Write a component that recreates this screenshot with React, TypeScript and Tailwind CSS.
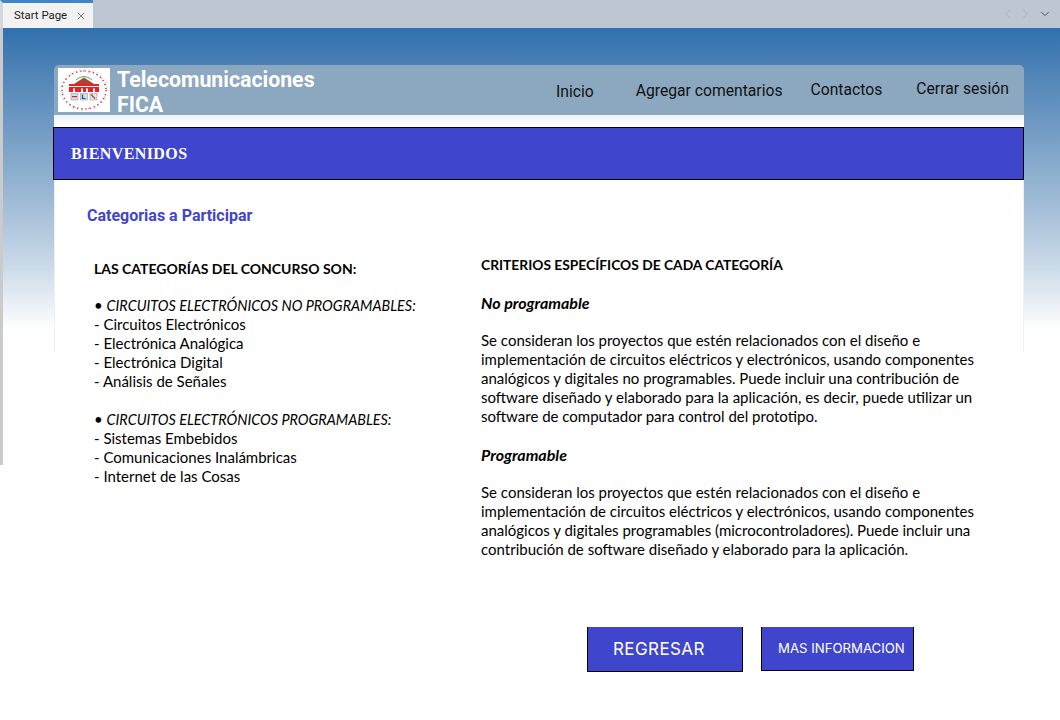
import React from "react";

const Logo = () => (
  <svg viewBox="0 0 52 44" className="w-[52px] h-[44px] bg-white shrink-0">
    {/* outer ring: red lettering and grey dots */}
    <ellipse cx="26" cy="22" rx="22" ry="19" fill="none" stroke="#e0242c" strokeWidth="1.5" strokeDasharray="1.2 3" />
    <ellipse cx="26" cy="22" rx="22" ry="19" fill="none" stroke="#666" strokeWidth="1" strokeDasharray="0.8 6" />
    <ellipse cx="26" cy="22" rx="24" ry="20.5" fill="none" stroke="#aaa" strokeWidth="0.5" strokeDasharray="1.5 3" />
    {/* green arc + roof */}
    <path d="M18 12 Q26 5 34 12" fill="none" stroke="#3aa655" strokeWidth="0.9" />
    <path d="M16 16 L26 9.5 L36 16 Z" fill="#a8452c" />
    {/* red building */}
    <rect x="11" y="16" width="30" height="2" fill="#ee1c25" />
    <rect x="11" y="19" width="30" height="5" fill="#ee1c25" />
    <rect x="15" y="20.5" width="2" height="3.5" fill="#fff" />
    <rect x="23" y="20.5" width="2" height="3.5" fill="#fff" />
    <rect x="28" y="20.5" width="2" height="3.5" fill="#fff" />
    <rect x="35" y="20.5" width="2" height="3.5" fill="#fff" />
    {/* small boxes */}
    <rect x="13" y="25.5" width="7" height="6.5" fill="#cfe0ea" stroke="#777" strokeWidth="0.4" />
    <rect x="14" y="28" width="5" height="1.2" fill="#d8242c" />
    <rect x="22.5" y="25.5" width="7" height="6.5" fill="#cfe0ea" stroke="#777" strokeWidth="0.4" />
    <path d="M24.5 26.5 L24.5 30.5 L27.5 30.5" fill="none" stroke="#1d4e89" strokeWidth="1.2" />
    <rect x="32" y="25.5" width="7" height="6.5" fill="#dfe6ea" stroke="#777" strokeWidth="0.4" />
    <path d="M33 26.5 L37 30.5" stroke="#a8452c" strokeWidth="1.2" />
  </svg>
);

const App = () => {
  return (
    <div className="w-[1060px] h-[720px] overflow-hidden bg-white flex flex-col font-['Lato',sans-serif] text-[15px] leading-[19px] text-black">
      {/* Tab bar */}
      <div className="h-[28px] shrink-0 bg-[#bdc7d3] flex items-end justify-between">
        <div className="w-[93px] h-[28px] border-t-[3px] border-t-[#3f86c9] border-l-[3px] border-l-[#d4d8dc] bg-[#f2f2f2] flex items-center pl-[11px] gap-[10px] font-['Roboto',sans-serif] text-[11.4px]">
          <span className="text-[#222]">Start Page</span>
          <svg viewBox="0 0 10 10" className="w-[8px] h-[8px]" stroke="#666" strokeWidth="1" fill="none">
            <path d="M1 1 L9 9 M9 1 L1 9" />
          </svg>
        </div>
        <div className="h-[28px] flex items-center gap-[11px] pr-[10px]">
          <svg viewBox="0 0 6 10" className="w-[6px] h-[10px]" stroke="#aab2bc" strokeWidth="1" fill="none">
            <path d="M5 0.5 L0.8 5 L5 9.5" />
          </svg>
          <svg viewBox="0 0 6 10" className="w-[6px] h-[10px]" stroke="#aab2bc" strokeWidth="1" fill="none">
            <path d="M1 0.5 L5.2 5 L1 9.5" />
          </svg>
          <svg viewBox="0 0 12 8" className="w-[10px] h-[6px] ml-[1px]" stroke="#555" strokeWidth="1.3" fill="none">
            <path d="M1 1.5 L6 6 L11 1.5" />
          </svg>
        </div>
      </div>

      {/* Page */}
      <div className="flex-1 pl-[54px] pr-[36px] pt-[37px] bg-no-repeat bg-[linear-gradient(#cbcbcb,#cbcbcb),linear-gradient(#3070ae_0%,#4a80b5_12%,#85a9cb_44%,#c0d2e4_74%,#e6edf4_90%,#fff_100%)] [background-size:3px_437px,100%_302px]">
        <div className="w-[970px]">
          {/* Header */}
          <div className="h-[50px] rounded-t-[5px] bg-[#8ca7c0] flex pl-[4px] pt-[3px]">
            <Logo />
            <div className="ml-[7px] -mt-[1px] w-[200px] font-['Roboto',sans-serif] font-bold text-[21.3px] leading-[25px] text-white">
              Telecomunicaciones
              <br />
              FICA
            </div>
            <nav className="ml-[239px] flex font-['Roboto',sans-serif] text-[15.7px] leading-[19px] text-[#111]">
              <span className="mt-[14px]">Inicio</span>
              <span className="ml-[42px] mt-[13px]">Agregar comentarios</span>
              <span className="ml-[28px] mt-[12px]">Contactos</span>
              <span className="ml-[34px] mt-[11px]">Cerrar sesión</span>
            </nav>
          </div>

          <div className="h-[12px] bg-[linear-gradient(#eff3f5,#fff)]" />

          {/* Banner */}
          <div className="h-[53px] -ml-px border border-black bg-[#3f45cc] flex items-center pl-[17px] font-['Liberation_Serif',serif] font-bold text-[16px] tracking-[0.4px] text-white">
            BIENVENIDOS
          </div>

          {/* Body */}
          <div className="h-[447px] bg-white bg-no-repeat bg-[linear-gradient(#efefef,#efefef),linear-gradient(#efefef,#efefef)] [background-position:left_top,right_top] [background-size:1px_172px]">
            <h2 className="pl-[33px] pt-[26px] font-['Roboto',sans-serif] font-bold text-[16px] leading-[19px] text-[#3f45cc]">
              Categorias a Participar
            </h2>

            <div className="flex mt-[21px]">
              <div className="w-[427px] pl-[40px] pt-[13px]">
                <p className="font-bold text-[14px]">LAS CATEGORÍAS DEL CONCURSO SON:</p>
                <p className="mt-[18px]">
                  • <i className="text-[14.4px]">CIRCUITOS ELECTRÓNICOS NO PROGRAMABLES:</i>
                </p>
                <p>- Circuitos Electrónicos</p>
                <p>- Electrónica Analógica</p>
                <p>- Electrónica Digital</p>
                <p>- Análisis de Señales</p>
                <p className="mt-[19px]">
                  • <i className="text-[14.4px]">CIRCUITOS ELECTRÓNICOS PROGRAMABLES:</i>
                </p>
                <p>- Sistemas Embebidos</p>
                <p>- Comunicaciones Inalámbricas</p>
                <p>- Internet de las Cosas</p>
              </div>

              <div className="w-[510px] pt-[9px]">
                <p className="font-bold text-[13.8px]">CRITERIOS ESPECÍFICOS DE CADA CATEGORÍA</p>
                <p className="mt-[19px] font-bold italic text-[16px]">No programable</p>
                <p className="mt-[19px]">
                  Se consideran los proyectos que estén relacionados con el diseño e
                  <br />
                  implementación de circuitos eléctricos y electrónicos, usando componentes
                  <br />
                  analógicos y digitales no programables. Puede incluir una contribución de
                  <br />
                  software diseñado y elaborado para la aplicación, es decir, puede utilizar un
                  <br />
                  software de computador para control del prototipo.
                </p>
                <p className="mt-[19px] font-bold italic text-[16px]">Programable</p>
                <p className="mt-[19px]">
                  Se consideran los proyectos que estén relacionados con el diseño e
                  <br />
                  implementación de circuitos eléctricos y electrónicos, usando componentes
                  <br />
                  analógicos y digitales programables (microcontroladores). Puede incluir una
                  <br />
                  contribución de software diseñado y elaborado para la aplicación.
                </p>
              </div>
            </div>

            {/* Buttons */}
            <div className="flex items-start mt-[68px] pl-[533px] gap-[18px] font-['Inter',sans-serif] text-white">
              <button className="w-[156px] h-[45px] bg-[#3f45cc] border border-t-0 border-black text-[17px] tracking-[0.4px] text-left pl-[25px]">
                REGRESAR
              </button>
              <button className="w-[153px] h-[44px] bg-[#3f45cc] border border-t-0 border-black text-[13.2px] text-left pl-[16px]">
                MAS INFORMACION
              </button>
            </div>
          </div>
        </div>
      </div>
    </div>
  );
};

export default App;
